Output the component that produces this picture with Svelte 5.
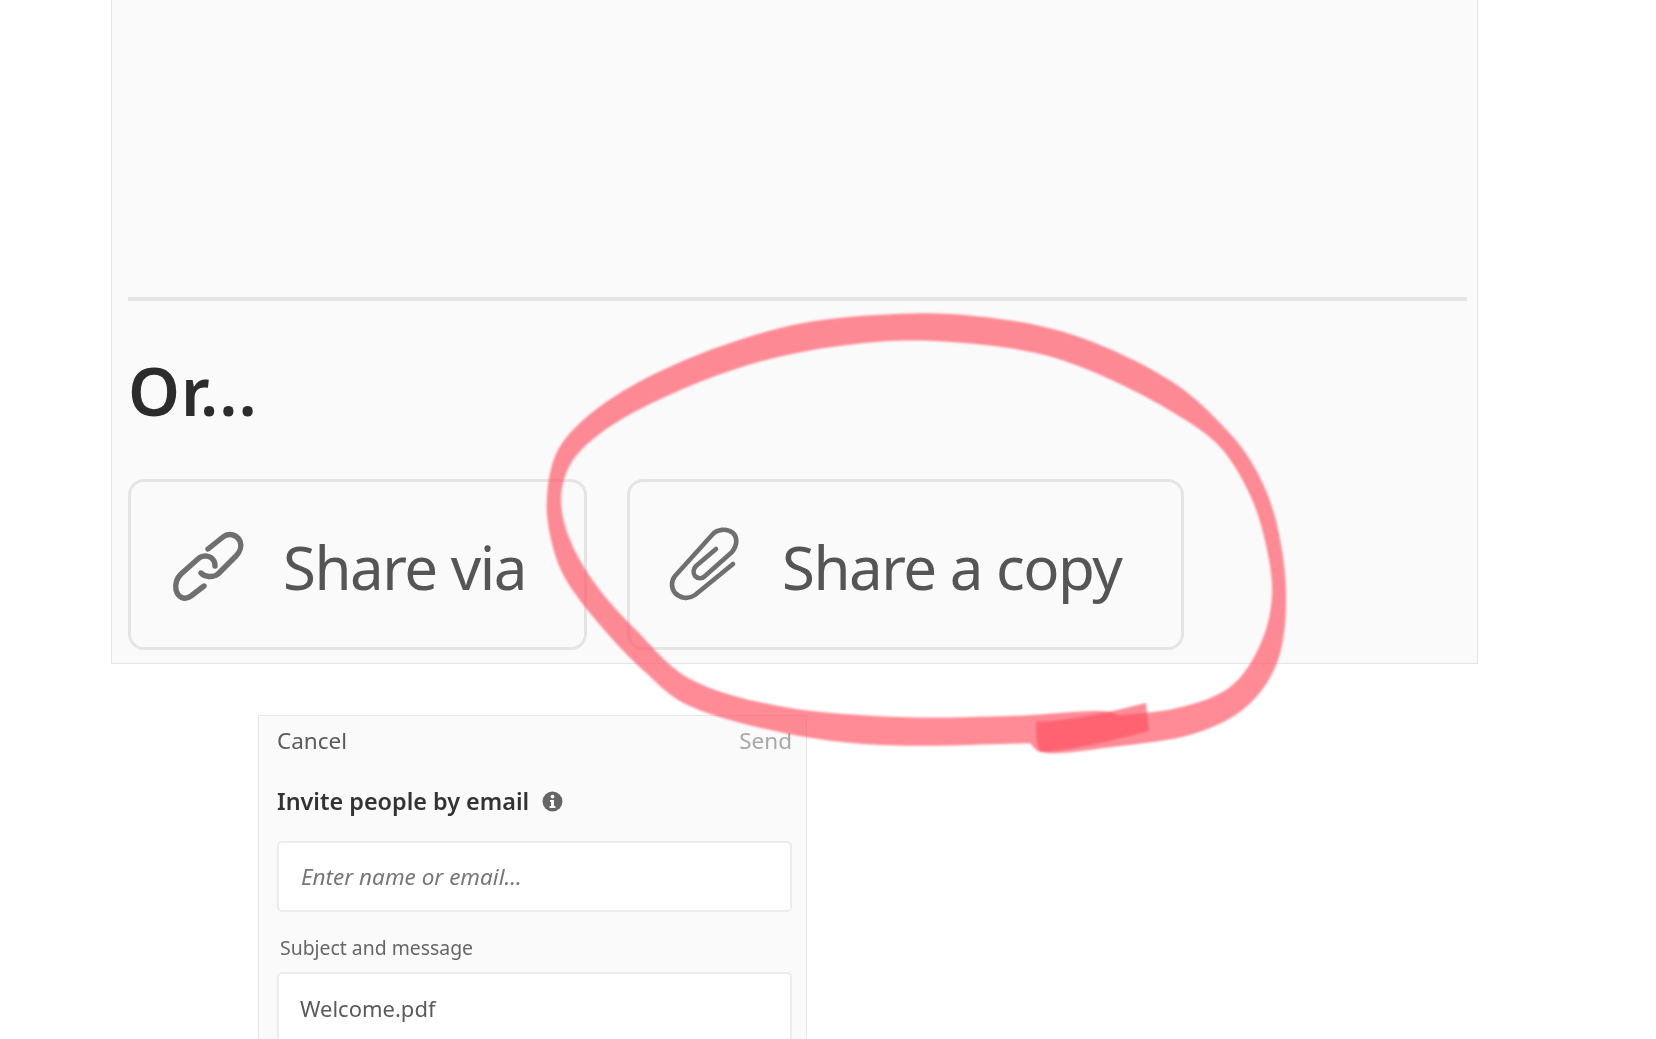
<script>
  // marker ring, traced as an outline because the pen width varies
  const ring = [
    [1110,738],[1000,744],[880,745],[784,733],[692,707],[645,672],[600,625],[565,578],[550,535],[547,496],
    [556,454],[581,422],[623,391],[676,364],[739,340],[803,323],[876,315],[950,314],[1036,325],[1105,347],
    [1174,383],[1220,423],[1252,463],[1275,517],[1286,591],[1278,660],[1246,707],[1193,734],[1120,746],[1041,752],
    [1036,722],[1110,716],[1177,708],[1230,687],[1260,645],[1272,596],[1266,545],[1250,495],[1220,447],[1174,413],
    [1105,377],[1036,353],[950,342],[876,342],[792,354],[718,375],[644,407],[597,436],[570,465],[561,500],
    [570,540],[596,585],[636,630],[692,680],[784,707],[900,717],[1010,716],[1110,712]
  ];

  function smooth(pts) {
    let d = `M${pts[0][0]} ${pts[0][1]}`;
    for (let i = 0; i < pts.length; i++) {
      const p0 = pts[(i - 1 + pts.length) % pts.length];
      const p1 = pts[i];
      const p2 = pts[(i + 1) % pts.length];
      const p3 = pts[(i + 2) % pts.length];
      const c1 = [p1[0] + (p2[0] - p0[0]) / 6, p1[1] + (p2[1] - p0[1]) / 6];
      const c2 = [p2[0] - (p3[0] - p1[0]) / 6, p2[1] - (p3[1] - p1[1]) / 6];
      d += `C${c1[0].toFixed(1)} ${c1[1].toFixed(1)} ${c2[0].toFixed(1)} ${c2[1].toFixed(1)} ${p2[0]} ${p2[1]}`;
    }
    return d + 'Z';
  }

  const ringPath = smooth(ring);
</script>

<div class="page">
  <section class="panel">
    <hr class="divider" />
    <h2>Or...</h2>
    <div class="actions">
      <button class="share via">
        <svg width="100" height="100" viewBox="0 0 100 100" fill="none" stroke="#6f6f6f" stroke-width="5.4" stroke-linecap="round" stroke-linejoin="round">
          <path d="M47 38 L62 26 C68 21 76 24 79 30 C81 35 79 41 75 45 L57 63 C52 67 44 66 40 62" />
          <path d="M43 75 L30 85 C23 90 17 86 15 79 C14 73 15 68 20 63 L38 47 C42 44 50 44 53 50 C54 52 54 54 54 55" />
        </svg>
        <span>Share via</span>
      </button>
      <button class="share copy">
        <svg width="100" height="90" viewBox="0 0 100 90" fill="none" stroke="#6f6f6f" stroke-width="4.6" stroke-linecap="round" stroke-linejoin="round">
          <path d="M76 48 L38 79 C31 84 23 82 18 77 C14 72 14 65 18 60 L55 19 C60 13 70 12 76 17 C81 22 80 30 75 36 L48 60 C45 63 41 63 38 60 C36 57 36 53 39 50 L59 33" />
        </svg>
        <span>Share a copy</span>
      </button>
    </div>
  </section>

  <section class="invite">
    <div class="top">
      <span class="cancel">Cancel</span>
      <span class="send">Send</span>
    </div>
    <div class="title">
      <span>Invite people by email</span>
      <svg width="21" height="21" viewBox="0 0 21 21">
        <circle cx="10.5" cy="10.5" r="10" fill="#666" />
        <circle cx="10.5" cy="5.6" r="1.9" fill="#fafafa" />
        <path d="M8 9h4v6h1.4v2H7.6v-2H9v-4H8z" fill="#fafafa" />
      </svg>
    </div>
    <div class="field name">Enter name or email...</div>
    <div class="label">Subject and message</div>
    <div class="field message">Welcome.pdf</div>
  </section>

  <svg class="ring" width="1656" height="1039" viewBox="0 0 1656 1039">
    <path d={ringPath} />
    <path d="M1036 722C1075 720 1110 712 1146 703L1149 731C1110 741 1075 750 1040 752Q1036 745 1036 722Z" />
  </svg>
</div>

<style>
  :global(body) {
    background: #fff;
  }

  .page {
    position: relative;
    width: 1656px;
    height: 1039px;
    overflow: hidden;
    font-family: "Noto Sans", "Open Sans", sans-serif;
  }

  .panel {
    box-sizing: border-box;
    width: 1367px;
    height: 664px;
    margin-left: 111px;
    padding: 297px 10px 0 16px;
    background: #fafafa;
    border: 1px solid #e6e6e6;
    border-top: none;
  }

  .divider {
    height: 4px;
    margin: 0;
    border: none;
    background: #e5e5e5;
  }

  h2 {
    margin: 47px 0 0;
    font-size: 66px;
    line-height: 84px;
    font-weight: 600;
    letter-spacing: 1px;
    color: #2c2c2c;
  }

  .actions {
    display: flex;
    gap: 40px;
    margin-top: 47px;
  }

  .share {
    box-sizing: border-box;
    display: flex;
    align-items: center;
    height: 171px;
    padding: 0;
    background: #fafafa;
    border: 3px solid #e4e4e4;
    border-radius: 16px;
    font: inherit;
    font-size: 60px;
    font-weight: 400;
    letter-spacing: -1.5px;
    color: #555;
  }

  .share span {
    padding-top: 5px;
    line-height: 1;
  }

  .via {
    width: 459px;
  }

  .via svg {
    margin: -8px 0 0 30px;
  }

  .via span {
    margin-left: 22px;
  }

  .copy {
    width: 557px;
  }

  .copy svg {
    margin: -8px 0 0 27px;
  }

  .copy span {
    margin-left: 25px;
  }

  .invite {
    box-sizing: border-box;
    width: 549px;
    height: 330px;
    margin: 51px 0 0 258px;
    padding: 0 14px 0 18px;
    background: #fafafa;
    border: 1px solid #e6e6e6;
    border-bottom: none;
    filter: blur(0.6px);
  }

  .top {
    display: flex;
    justify-content: space-between;
    padding-top: 9px;
    font-size: 22.5px;
    line-height: 32px;
    color: #5a5a5a;
  }

  .send {
    color: #a8a8a8;
  }

  .title {
    display: flex;
    align-items: center;
    gap: 13px;
    margin-top: 28px;
    font-size: 23.4px;
    line-height: 32px;
    font-weight: 600;
    color: #333;
  }

  .field {
    box-sizing: border-box;
    background: #fff;
    border: 2px solid #ececec;
    border-radius: 5px;
    padding-left: 22px;
  }

  .name {
    height: 71px;
    margin-top: 24px;
    font-size: 22.5px;
    line-height: 68px;
    font-style: italic;
    color: #777;
  }

  .label {
    margin: 20px 0 0 3px;
    font-size: 19.4px;
    line-height: 32px;
    color: #666;
  }

  .message {
    height: 120px;
    margin-top: 8px;
    padding-left: 21px;
    font-size: 22px;
    line-height: 68px;
    color: #5a5a5a;
  }

  .ring {
    position: absolute;
    left: 0;
    top: 0;
    pointer-events: none;
    filter: blur(0.8px);
  }

  .ring path {
    fill: #ff4f60;
    opacity: 0.66;
  }
</style>
